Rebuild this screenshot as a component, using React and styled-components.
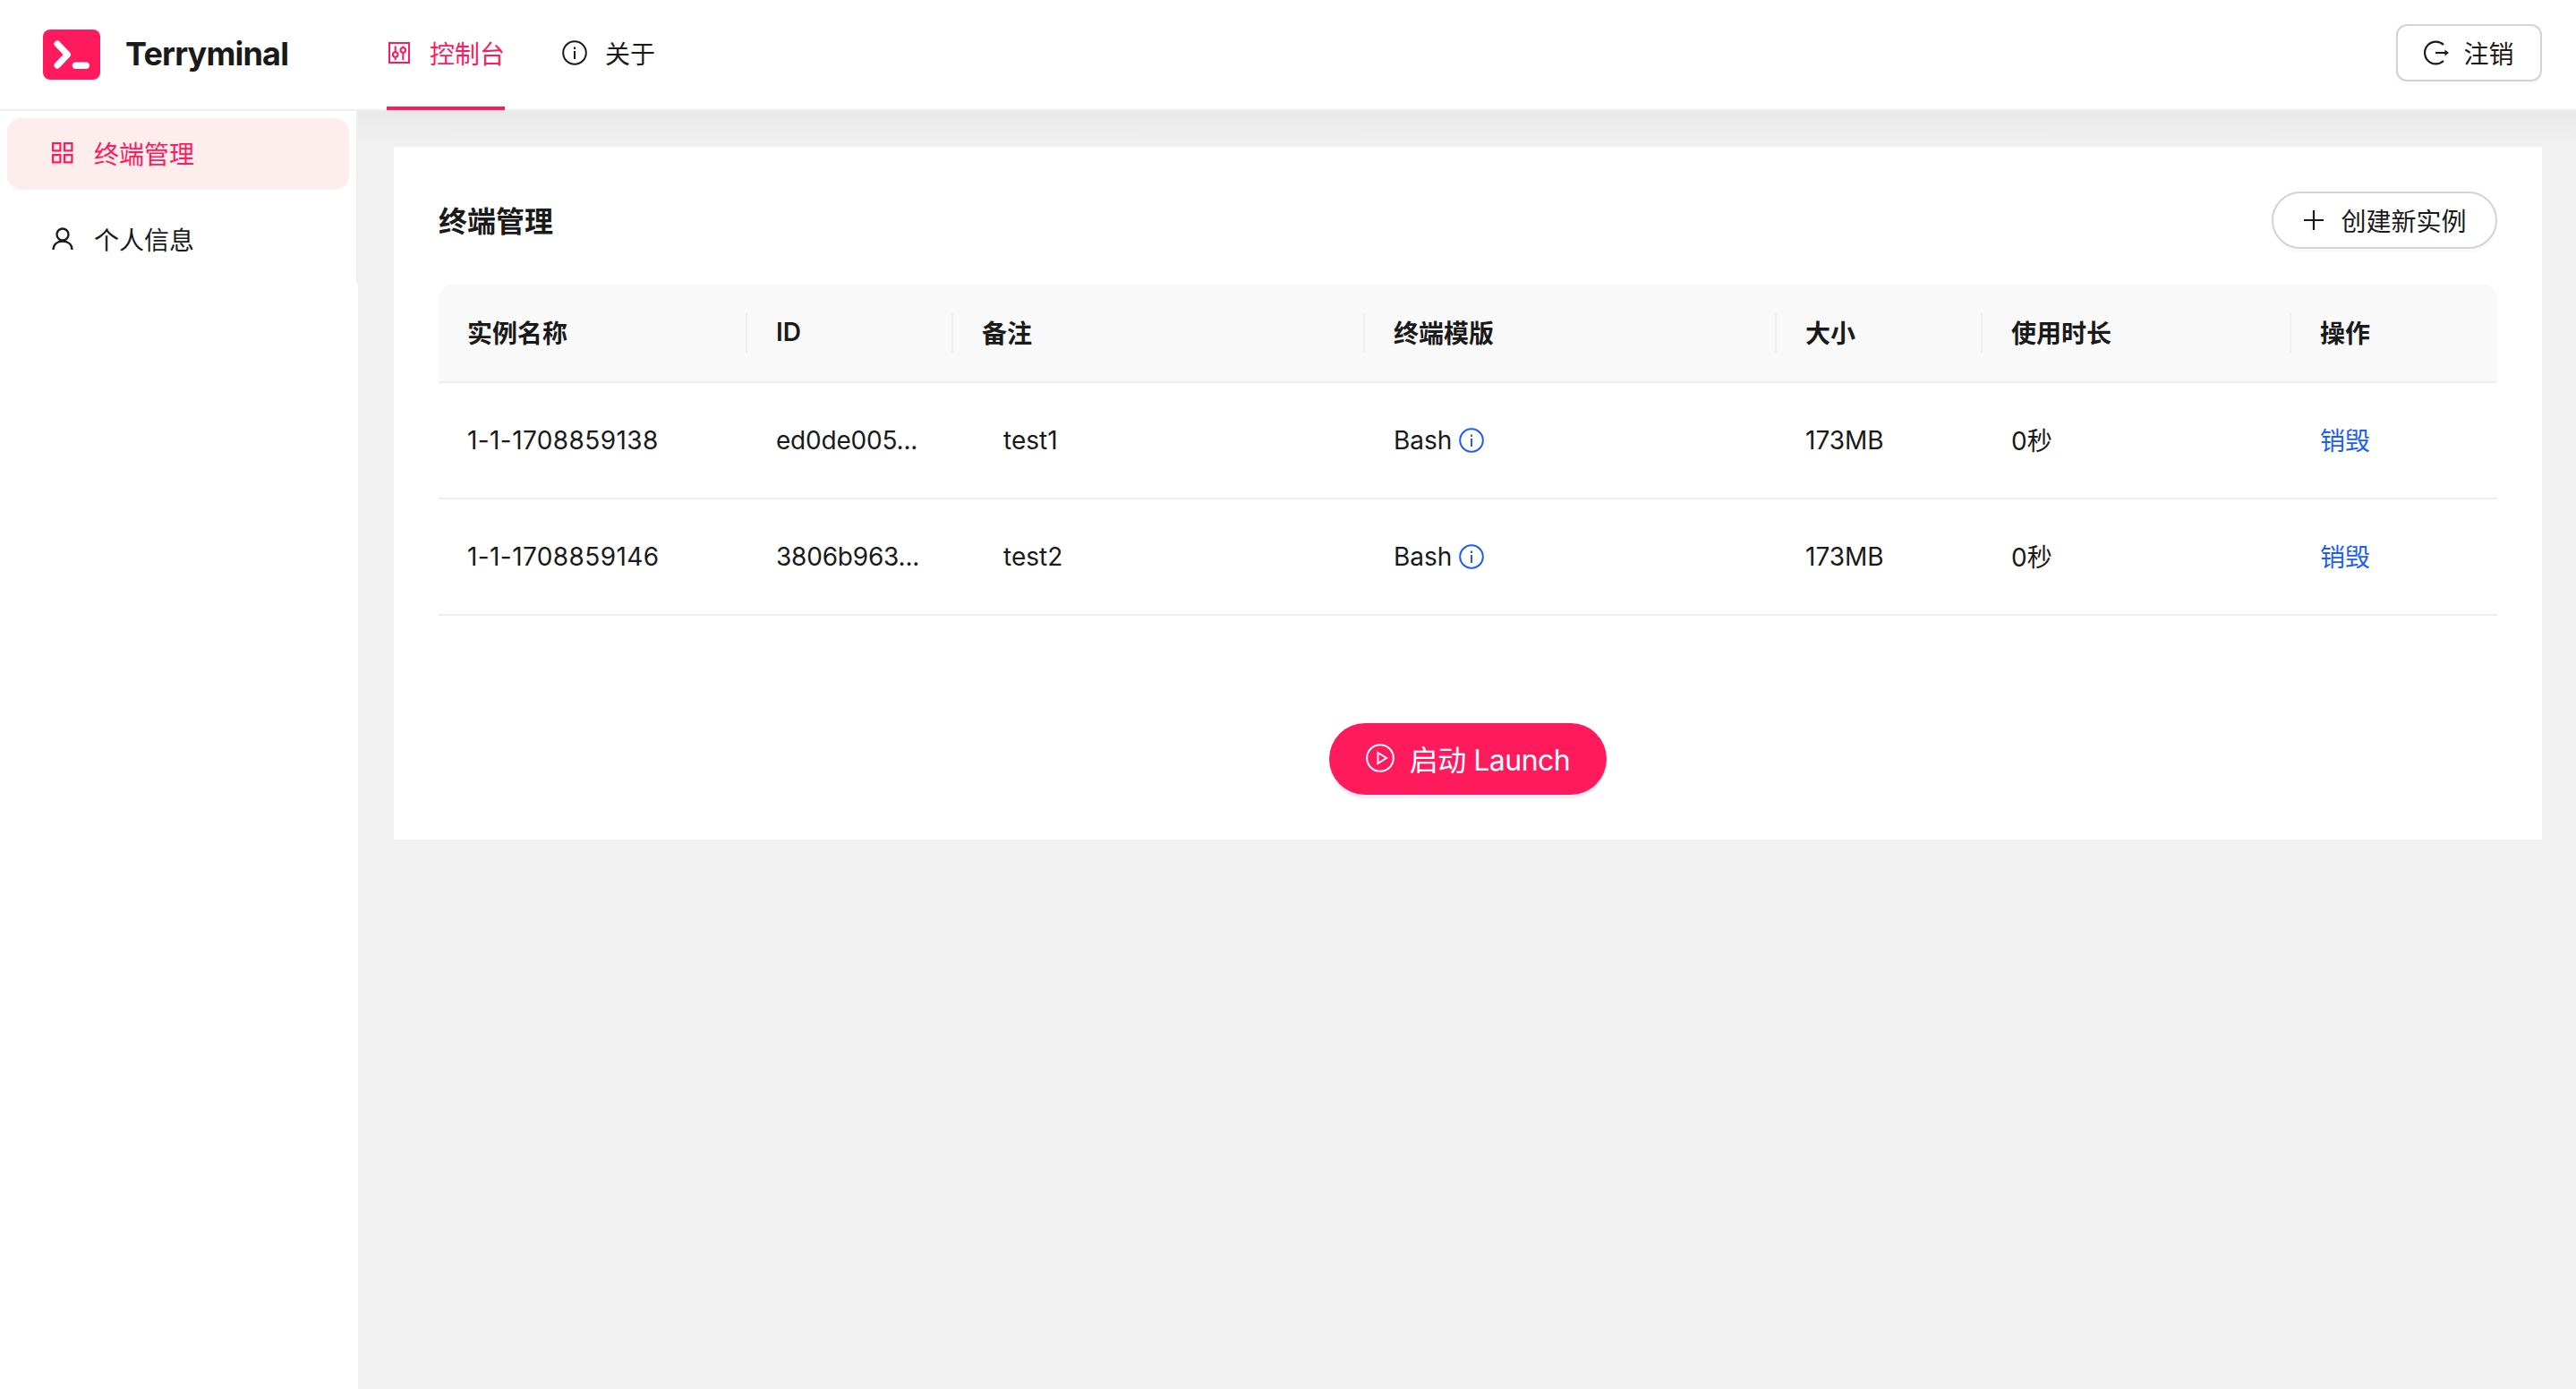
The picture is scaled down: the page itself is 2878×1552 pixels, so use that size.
import styled, { createGlobalStyle } from "styled-components"

const PINK = "#ff1a5e"
const BLUE = "#1a5cff"
const TEXT = "#1a1a1a"

const rows = [
  { name: "1-1-1708859138", id: "ed0de005...", note: "test1" },
  { name: "1-1-1708859146", id: "3806b963...", note: "test2" },
]

const columns = [
  { label: "实例名称", width: 345 },
  { label: "ID", width: 230 },
  { label: "备注", width: 460 },
  { label: "终端模版", width: 460 },
  { label: "大小", width: 230 },
  { label: "使用时长", width: 345 },
  { label: "操作", width: 230 },
]

const LogoIcon = () => (
  <svg width="64" height="56" viewBox="0 0 64 56">
    <rect width="64" height="56" rx="8" fill={PINK} />
    <path d="M16 16 L27.5 28 L16 40" fill="none" stroke="#fff" strokeWidth="7" strokeLinecap="round" strokeLinejoin="round" />
    <path d="M36.5 40.3 H48.2" fill="none" stroke="#fff" strokeWidth="7.4" strokeLinecap="round" />
  </svg>
)

const ControlIcon = () => (
  <svg width="28" height="28" viewBox="0 0 28 28" fill="none" stroke="currentColor" strokeWidth="2">
    <rect x="3" y="3" width="22" height="22" />
    <path d="M9.7 6.5v6.5M9.7 19v3M18.3 6.5v1.5M18.3 14v8" />
    <circle cx="9.7" cy="16" r="2.8" />
    <circle cx="18.3" cy="11" r="2.8" />
  </svg>
)

const InfoIcon = ({ size = 28, stroke = 2 }) => (
  <svg width={size} height={size} viewBox="0 0 28 28" fill="none" stroke="currentColor" strokeWidth={stroke}>
    <circle cx="14" cy="14" r="12.8" />
    <path d="M14 12v9" />
    <path d="M14 7.5v2.4" />
  </svg>
)

const GridIcon = () => (
  <svg width="24" height="24" viewBox="0 0 24 24" fill="none" stroke="currentColor" strokeWidth="2.2">
    <rect x="1.1" y="1.1" width="8.3" height="8.3" />
    <rect x="14.1" y="1.1" width="8.3" height="8.3" />
    <rect x="1.1" y="14.1" width="8.3" height="8.3" />
    <rect x="14.1" y="14.1" width="8.3" height="8.3" />
  </svg>
)

const UserIcon = () => (
  <svg width="24" height="26" viewBox="0 0 24 26" fill="none" stroke="currentColor" strokeWidth="2.3">
    <circle cx="12" cy="8" r="6.5" />
    <path d="M1.5 25C1.5 19 6 15.5 12 15.5S22.5 19 22.5 25" />
  </svg>
)

const LogoutIcon = () => (
  <svg width="28" height="28" viewBox="0 0 28 28" fill="none" stroke="currentColor" strokeWidth="2.2">
    <path d="M22 5A12.4 12.4 0 1 0 22 23" />
    <path d="M13 14h11" />
    <path d="M23.5 10.5L28 14l-4.5 3.5z" fill="currentColor" stroke="none" />
  </svg>
)

const PlusIcon = () => (
  <svg width="24" height="24" viewBox="0 0 24 24" fill="none" stroke="currentColor" strokeWidth="2.2">
    <path d="M13 1v22M2 12h22" />
  </svg>
)

const PlayIcon = () => (
  <svg width="32" height="32" viewBox="0 0 32 32" fill="none" stroke="currentColor" strokeWidth="2">
    <circle cx="16" cy="16" r="14.8" />
    <path d="M13.5 10l9.5 6-9.5 6z" />
  </svg>
)

const App = () => {
  return (
    <>
      <GlobalStyle />
      <Page>
        <Header>
          <Brand>
            <LogoIcon />
            <BrandName>Terryminal</BrandName>
          </Brand>
          <Nav>
            <NavItem $active>
              <ControlIcon />
              控制台
            </NavItem>
            <NavItem>
              <InfoIcon />
              关于
            </NavItem>
          </Nav>
          <LogoutButton>
            <LogoutIcon />
            注销
          </LogoutButton>
        </Header>

        <Body>
          <Sidebar>
            <MenuItem $active>
              <GridIcon />
              终端管理
            </MenuItem>
            <MenuItem>
              <UserIcon />
              个人信息
            </MenuItem>
          </Sidebar>

          <Main>
            <Card>
              <CardTop>
                <Title>终端管理</Title>
                <CreateButton>
                  <PlusIcon />
                  创建新实例
                </CreateButton>
              </CardTop>

              <Table>
                <colgroup>
                  {columns.map((col) => (
                    <col key={col.label} width={col.width} />
                  ))}
                </colgroup>
                <thead>
                  <tr>
                    {columns.map((col) => (
                      <Th key={col.label}>{col.label}</Th>
                    ))}
                  </tr>
                </thead>
                <tbody>
                  {rows.map((row) => (
                    <tr key={row.name}>
                      <NameCell>{row.name}</NameCell>
                      <IdCell>{row.id}</IdCell>
                      <Td $indent>{row.note}</Td>
                      <Td>
                        <Template>
                          Bash
                          <TemplateInfo>
                            <InfoIcon />
                          </TemplateInfo>
                        </Template>
                      </Td>
                      <Td>173MB</Td>
                      <Td $cjk>0秒</Td>
                      <Td $cjk>
                        <DestroyLink>销毁</DestroyLink>
                      </Td>
                    </tr>
                  ))}
                </tbody>
              </Table>

              <LaunchRow>
                <LaunchButton>
                  <PlayIcon />
                  启动 Launch
                </LaunchButton>
              </LaunchRow>
            </Card>
          </Main>
        </Body>
      </Page>
    </>
  )
}

//-----styled-components-----

const GlobalStyle = createGlobalStyle`
  html, body {
    margin: 0;
    padding: 0;
    background: #f1f1f1;
  }

  body {
    font-family: Inter, "Noto Sans CJK SC", sans-serif;
    font-size: 28px;
    color: ${TEXT};
  }

  * {
    box-sizing: border-box;
  }
`

const Page = styled.div`
  width: 2878px;
  height: 1552px;
  display: flex;
  flex-direction: column;
  overflow: hidden;
`

// top bar
const Header = styled.header`
  height: 124px;
  flex-shrink: 0;
  display: flex;
  align-items: flex-start;
  padding: 0 38px 0 48px;
  background: #fff;
  border-bottom: 2px solid #eeeeee;
`

const Brand = styled.div`
  width: 384px;
  height: 122px;
  display: flex;
  align-items: center;
  gap: 28px;
`

const BrandName = styled.span`
  font-size: 36px;
  font-weight: 700;
  letter-spacing: -0.8px;
  margin-top: -2px;
`

const Nav = styled.nav`
  flex: 1;
  display: flex;
  gap: 64px;
`

const NavItem = styled.a`
  height: 123px;
  padding-bottom: 2px;
  display: flex;
  align-items: center;
  gap: 20px;
  color: ${(props) => (props.$active ? PINK : TEXT)};
  border-bottom: 4px solid ${(props) => (props.$active ? PINK : "transparent")};
`

const LogoutButton = styled.button`
  width: 163px;
  height: 64px;
  margin-top: 27px;
  display: flex;
  align-items: center;
  justify-content: center;
  gap: 16px;
  font: inherit;
  color: ${TEXT};
  background: #fff;
  border: 2px solid #d3d3d3;
  border-radius: 12px;
  box-shadow: 0 4px 0 rgba(0, 0, 0, 0.02);
`

const Body = styled.div`
  flex: 1;
  display: flex;
`

const Sidebar = styled.aside`
  position: relative;
  width: 400px;
  flex-shrink: 0;
  padding: 8px 10px 0 8px;
  display: flex;
  flex-direction: column;
  gap: 16px;
  background: #fff;

  &::after {
    content: "";
    position: absolute;
    top: 0;
    right: 0;
    width: 2px;
    height: 192px;
    background: #eeeeee;
  }
`

const MenuItem = styled.div`
  height: 80px;
  padding: 0 0 2px 50px;
  display: flex;
  align-items: center;
  gap: 23px;
  border-radius: 16px;
  color: ${(props) => (props.$active ? PINK : TEXT)};
  background: ${(props) => (props.$active ? "#fdeded" : "transparent")};
`

const Main = styled.main`
  flex: 1;
  padding: 40px 38px 0 40px;
  background: linear-gradient(#e9e9e9, #f1f1f1 40px);
`

const Card = styled.section`
  height: 774px;
  padding: 50px;
  background: #fff;
`

const CardTop = styled.div`
  height: 104px;
  display: flex;
  justify-content: space-between;
  align-items: flex-start;
`

const Title = styled.h2`
  margin: 0;
  height: 64px;
  line-height: 68px;
  font-size: 32px;
  font-weight: 700;
`

const CreateButton = styled.button`
  width: 252px;
  height: 64px;
  display: flex;
  align-items: center;
  justify-content: center;
  gap: 19px;
  font: inherit;
  color: ${TEXT};
  background: #fff;
  border: 2px solid #d3d3d3;
  border-radius: 32px;
  box-shadow: 0 4px 0 rgba(0, 0, 0, 0.02);
`

const Table = styled.table`
  width: 2300px;
  table-layout: fixed;
  border-collapse: separate;
  border-spacing: 0;
`

const Th = styled.th`
  position: relative;
  height: 110px;
  padding: 0 32px 2px;
  text-align: left;
  font-weight: 600;
  background: #f9f9f9;
  border-bottom: 2px solid #eeeeee;

  &:first-child {
    border-top-left-radius: 16px;
  }

  &:last-child {
    border-top-right-radius: 16px;
  }

  &:not(:last-child)::after {
    content: "";
    position: absolute;
    top: 50%;
    right: 0;
    width: 2px;
    height: 44px;
    transform: translateY(-50%);
    background: #f0f0f0;
  }
`

const Td = styled.td`
  height: 130px;
  padding: 0 32px ${(props) => (props.$cjk ? "3px" : "0")} ${(props) => (props.$indent ? "56px" : "32px")};
  border-bottom: 2px solid #eeeeee;
  white-space: nowrap;
`

// 数字宽度和原图差一点
const NameCell = styled(Td)`
  letter-spacing: 0.4px;
`

const IdCell = styled(Td)`
  letter-spacing: -0.2px;
`

const Template = styled.span`
  display: flex;
  align-items: center;
  gap: 8px;
`

const TemplateInfo = styled.span`
  display: flex;
  color: ${BLUE};
`

const DestroyLink = styled.a`
  color: ${BLUE};
`

const LaunchRow = styled.div`
  margin-top: 120px;
  display: flex;
  justify-content: center;
`

const LaunchButton = styled.button`
  width: 310px;
  height: 80px;
  padding: 0 0 2px;
  display: flex;
  align-items: center;
  justify-content: center;
  gap: 17px;
  font: inherit;
  font-size: 32px;
  letter-spacing: -0.5px;
  color: #fff;
  background: ${PINK};
  border: none;
  border-radius: 40px;
  box-shadow: 0 4px 0 rgba(255, 26, 94, 0.1);
`

export default App
